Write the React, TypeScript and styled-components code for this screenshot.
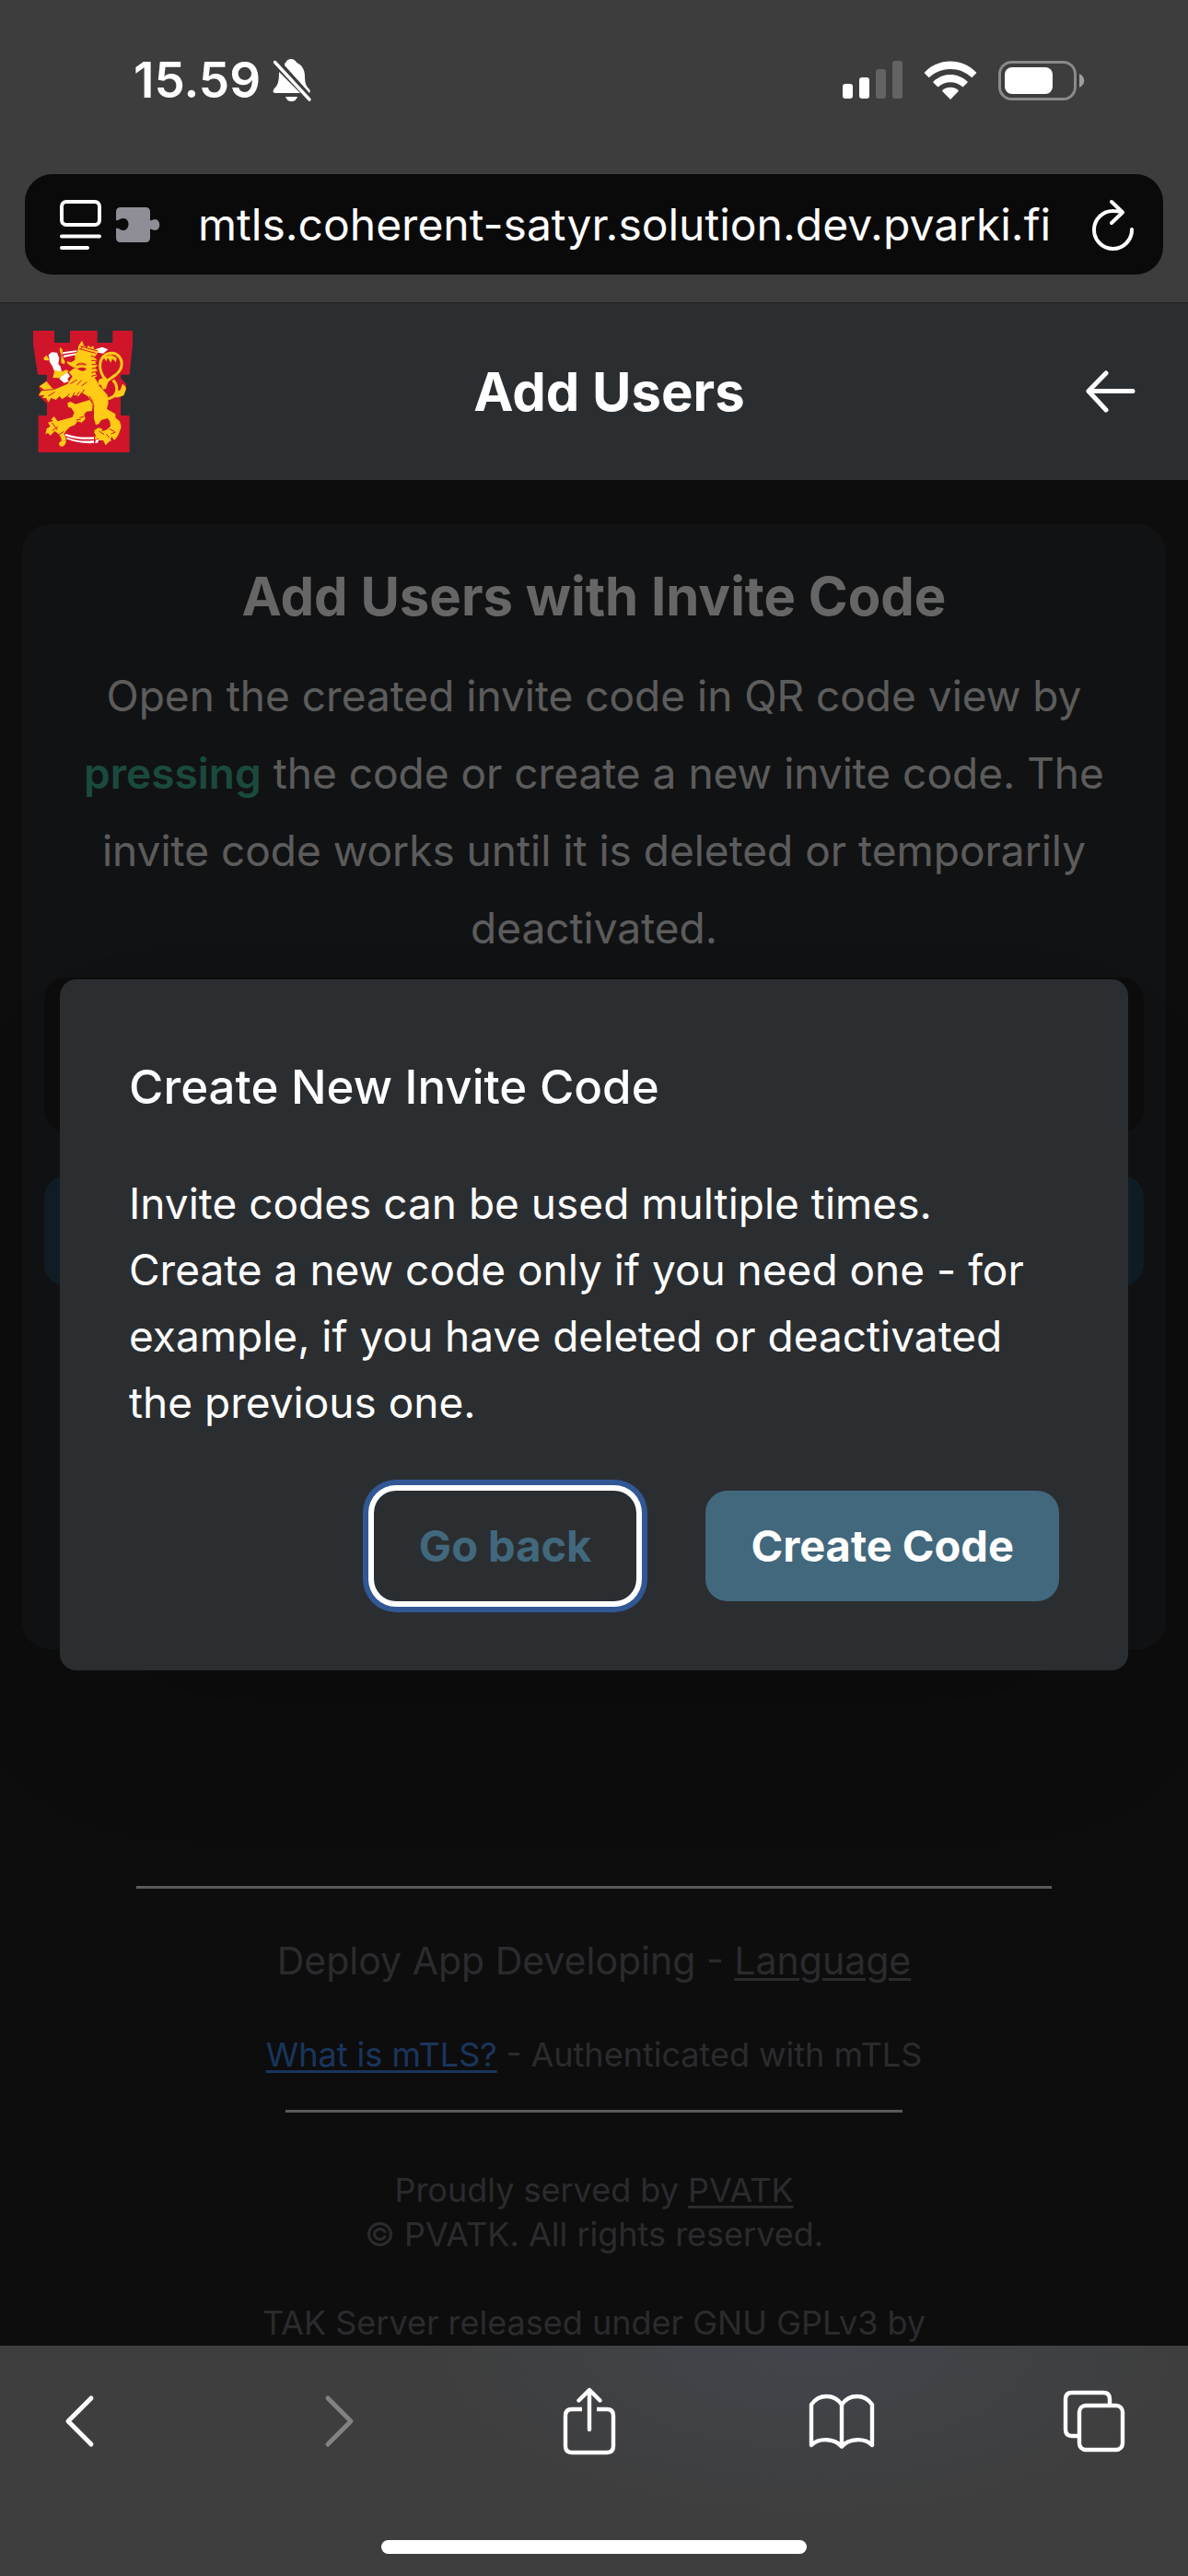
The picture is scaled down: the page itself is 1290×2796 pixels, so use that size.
import React from "react";
import styled, { createGlobalStyle } from "styled-components";

const GlobalStyle = createGlobalStyle`
  *, *::before, *::after { box-sizing: border-box; }
  body {
    margin: 0;
    background: #212121;
    color: #ffffff;
    font-family: Inter, "Liberation Sans", sans-serif;
  }
  h1, h2, p { margin: 0; }
  button, input { font: inherit; color: inherit; }
`;

const Screen = styled.div`
  display: flex;
  flex-direction: column;
  height: 100vh;
  overflow: hidden;
`;

/* ---------- Phone and browser chrome ---------- */

const TopChrome = styled.div`
  flex: none;
  background: #3d3d3d;
  border-bottom: 1px solid #222222;
`;

const StatusBar = styled.div`
  display: flex;
  align-items: center;
  justify-content: space-between;
  height: 174px;
  padding: 0 112px 0 145px;
`;

const StatusGroup = styled.div<{ $gap: number }>`
  display: flex;
  align-items: center;
  gap: ${(p) => p.$gap}px;
`;

const Clock = styled.time`
  font-size: 53px;
  line-height: 60px;
  font-weight: 600;
`;

const AddressRow = styled.div`
  padding: 15px 27px 30px;
`;

const AddressBar = styled.div`
  display: flex;
  align-items: center;
  height: 109px;
  padding: 0 31px 0 38px;
  border-radius: 30px;
  background: #0a0a0a;
`;

const IconButton = styled.button`
  display: flex;
  flex: none;
  align-items: center;
  justify-content: center;
  padding: 0;
  border: 0;
  background: none;
  color: #ffffff;

  &:disabled { color: #828282; }
`;

const PuzzleButton = styled(IconButton)`
  margin-left: 16px;
  color: #8f8e96;
`;

const AddressInput = styled.input`
  flex: 1;
  min-width: 0;
  height: 72px;
  margin: 0 24px 0 41px;
  padding: 0;
  border: 0;
  outline: 0;
  background: none;
  font-size: 48px;
`;

const BottomChrome = styled.div`
  flex: none;
  background:
    radial-gradient(ellipse 420px 190px at 68% 0, #41454b, rgba(65, 69, 75, 0)),
    #3e3e3e;
`;

const Toolbar = styled.nav`
  display: flex;
  align-items: center;
  justify-content: space-between;
  height: 181px;
  padding: 0 66px 18px 56px;
`;

const ToolButton = styled(IconButton)`
  width: 72px;
  height: 90px;
`;

const HomeIndicator = styled.div`
  width: 462px;
  height: 15px;
  margin: 30px auto 24px;
  border-radius: 8px;
  background: #ffffff;
`;

/* ---------- Web page ---------- */

const Viewport = styled.div`
  position: relative;
  flex: 1;
  min-height: 0;
  overflow: hidden;
  background: #212121;
`;

const Header = styled.header`
  position: relative;
  z-index: 2;
  display: grid;
  grid-template-columns: 108px 1fr 54px;
  align-items: center;
  height: 192px;
  padding: 0 57px 0 36px;
  background: #2b2e31;
`;

const PageTitle = styled.h1`
  font-size: 58px;
  line-height: 84px;
  font-weight: 700;
  text-align: center;
`;

const Card = styled.section`
  min-height: 1221px;
  margin: 48px 24px 0;
  padding: 36px 24px 24px;
  border-radius: 30px;
  background: #2b2e31;
`;

const CardTitle = styled.h2`
  margin-bottom: 24px;
  font-size: 58px;
  line-height: 84px;
  font-weight: 700;
  text-align: center;
`;

const CardText = styled.p`
  margin-bottom: 12px;
  padding: 0 36px;
  color: #e5e5e5;
  font-size: 46px;
  line-height: 84px;
  text-align: center;
`;

const Highlight = styled.strong`
  color: #43b898;
  font-weight: 600;
`;

const CodeRow = styled.div`
  height: 167px;
  margin-bottom: 48px;
  border-radius: 24px;
  background: #212121;
`;

const WideButton = styled.button`
  display: block;
  width: 100%;
  height: 120px;
  border: 0;
  border-radius: 24px;
  background: #2b4c60;
`;

const Footer = styled.footer`
  display: flex;
  flex-direction: column;
  align-items: center;
  padding-top: 257px;
  color: #6c6c74;
  text-align: center;
`;

const Rule = styled.hr<{ $width: number; $above?: number }>`
  width: ${(p) => p.$width}%;
  height: 3px;
  margin: ${(p) => p.$above ?? 0}px 0 0;
  border: 0;
  background: #e0e0e0;
`;

const FooterLine = styled.p<{ $large?: boolean; $above: number }>`
  margin-top: ${(p) => p.$above}px;
  font-size: ${(p) => (p.$large ? 41 : 36)}px;
  line-height: ${(p) => (p.$large ? 60 : 48)}px;
`;

const FooterLink = styled.a<{ $blue?: boolean }>`
  color: ${(p) => (p.$blue ? "#4186e6" : "inherit")};
  text-decoration: underline;
  text-decoration-thickness: 3px;
  text-underline-offset: 4px;
`;

/* ---------- Dialog ---------- */

const Overlay = styled.div`
  position: absolute;
  inset: 0;
  z-index: 1;
  display: flex;
  align-items: center;
  padding: 0 65px;
  background: rgba(0, 0, 0, 0.6);
`;

const Dialog = styled.div`
  width: 100%;
  padding: 75px;
  border-radius: 18px;
  background: #2b2e31;
  box-shadow: 0 75px 150px -36px rgba(0, 0, 0, 0.15);
`;

const DialogTitle = styled.h2`
  margin-bottom: 48px;
  font-size: 51px;
  line-height: 84px;
  font-weight: 500;
`;

const DialogText = styled.p`
  font-size: 46px;
  line-height: 72px;
`;

const Actions = styled.div`
  display: flex;
  justify-content: flex-end;
  gap: 75px;
  margin-top: 60px;
`;

const Action = styled.button<{ $primary?: boolean }>`
  height: 120px;
  padding: 0 49px;
  border: 0;
  border-radius: 24px;
  background: ${(p) => (p.$primary ? "#42687d" : "transparent")};
  color: ${(p) => (p.$primary ? "#ffffff" : "#42687d")};
  box-shadow: ${(p) => (p.$primary ? "none" : "0 0 0 6px #ffffff, 0 0 0 12px #325795")};
  font-size: 47px;
  font-weight: 700;
  white-space: nowrap;
`;

/* ---------- Drawings ---------- */

const BellOff = () => (
  <svg width="44" height="48" viewBox="0 0 44 48" fill="currentColor" aria-hidden="true">
    <path d="M14 6C16 5 16 1 21 1s5 4 8 5c5 3 7 8 7 14 0 8 2 11 5 14 1 1 1 3 0 4L14 8z" />
    <path d="M8 15l23 23H4c-3 0-3-3-1-5 4-4 5-8 5-18z" />
    <path d="M15 42h13c-1 3-3 5-6.500 5S16 45 15 42z" />
    <path d="M3.500 4.500L41 45" stroke="currentColor" strokeWidth="3.400" strokeLinecap="round" />
  </svg>
);

const Signal = () => (
  <svg width="65" height="42" viewBox="0 0 65 42" fill="currentColor" aria-hidden="true">
    <rect x="0" y="25" width="11" height="16" rx="3" />
    <rect x="18" y="18" width="11" height="23" rx="3" />
    <rect x="36" y="9" width="11" height="32" rx="3" opacity="0.2" />
    <rect x="54" y="0" width="11" height="41" rx="3" opacity="0.2" />
  </svg>
);

const Wifi = () => (
  <svg width="58" height="42" viewBox="0 0 58 42" fill="currentColor" aria-hidden="true">
    <path d="M1 12.500C16-3.500 42-3.500 57 12.500l.3.800-5 5c-13-12.500-33.600-12.500-46.600 0l-5-5z" />
    <path d="M10.500 22.500c10.500-10 26.500-10 37 0l.2 1-5.200 5c-8-7-19-7-27 0l-5.200-5z" />
    <path d="M20.300 32c5-4.300 12.400-4.300 17.400 0l.1 1L29 42l-8.800-9z" />
  </svg>
);

const Battery = () => (
  <svg width="94" height="43" viewBox="0 0 94 43" fill="currentColor" aria-hidden="true">
    <rect x="1.500" y="1.500" width="82" height="40" rx="13" fill="none" stroke="currentColor" strokeWidth="3" opacity="0.4" />
    <rect x="7" y="7" width="52" height="29" rx="8" />
    <path d="M88 14c7 3 7 12 0 15z" opacity="0.5" />
  </svg>
);

const ReaderIcon = () => (
  <svg width="45" height="54" viewBox="0 0 45 54" fill="none" stroke="currentColor" strokeWidth="4" strokeLinecap="round" aria-hidden="true">
    <rect x="2" y="2" width="41" height="25" rx="5" />
    <path d="M2 39.500h41M2 52h28" />
  </svg>
);

const PuzzleIcon = () => (
  <svg width="48" height="40" viewBox="0 0 48 40" fill="currentColor" aria-hidden="true">
    <path d="M5 1h27q5 0 5 5v9c2 1 3-1 5-1 7 0 7 12 0 12-2 0-3-2-5-1v9q0 5-5 5H5q-5 0-5-5V24c3-1 3 1 7 2 8 1 9-13 1-13-4 0-5 3-8 2V6q0-5 5-5z" />
  </svg>
);

const ReloadIcon = () => (
  <svg width="46" height="56" viewBox="0 0 46 56" fill="none" stroke="currentColor" strokeWidth="4" strokeLinecap="round" strokeLinejoin="round" aria-hidden="true">
    <path d="M43 33A20.500 20.500 0 1 1 23 13c4 0 6 .3 9 1" />
    <path d="M21 3l12 11.500L21 26" />
  </svg>
);

const ArrowLeft = () => (
  <svg width="54" height="46" viewBox="0 0 54 46" fill="none" stroke="currentColor" strokeWidth="5" strokeLinecap="round" strokeLinejoin="round" aria-hidden="true">
    <path d="M22 3L3 22.500 22 43M3 22.500h48" />
  </svg>
);

const Chevron = ({ right }: { right?: boolean }) => (
  <svg width="48" height="58" viewBox="0 0 48 58" fill="none" stroke="currentColor" strokeWidth="5" strokeLinecap="round" strokeLinejoin="round" aria-hidden="true">
    <path d={right ? "M14 4l25 25-25 25" : "M31 4L6 29l25 25"} />
  </svg>
);

const ShareIcon = () => (
  <svg width="58" height="74" viewBox="0 0 58 74" fill="none" stroke="currentColor" strokeWidth="4.400" strokeLinecap="round" strokeLinejoin="round" aria-hidden="true">
    <path d="M21 24H10q-7 0-7 7v33q0 7 7 7h38q7 0 7-7V31q0-7-7-7H37" strokeLinecap="butt" />
    <path d="M29 46V4M17.500 14.500L29 3l11.500 11.500" />
  </svg>
);

const BookIcon = () => (
  <svg width="72" height="62" viewBox="0 0 72 62" fill="none" stroke="currentColor" strokeWidth="4.400" strokeLinejoin="round" strokeLinecap="round" aria-hidden="true">
    <path d="M3 13C11 1 28 1 36 13 44 1 61 1 69 13v44c-8-8-25-8-33 1.500C28 49 11 49 3 57zM36 13v45" />
  </svg>
);

const TabsIcon = () => (
  <svg width="68" height="68" viewBox="0 0 68 68" fill="none" stroke="currentColor" strokeWidth="4.400" aria-hidden="true">
    <path d="M17 50h-7q-7 0-7-7V10q0-7 7-7h34q7 0 7 7v7" />
    <rect x="18" y="17" width="47" height="48" rx="7" />
  </svg>
);

const Crest = () => (
  <svg width="108" height="132" viewBox="48 27 324 396" role="img" aria-label="Lion crest">
    <path fill="#d0152b" d="M48 27h69v39h51V27h89v39h50V27h65v43l-10 100h-29v10l10 12 9 10-4 24-15 14v63h29v120H65V303h28v-38l-14-14-14-14 6-14-5-14 27-22v-17H63L48 70z" />
    <g fill="#ffffff">
      <path d="M144 97l46-6v5l-46 7zM146 107l43-7 1 5-43 9zM245 89l28-9 19 8-16 13-38-7z" />
      <path d="M98 106l10-9 18 1 7 18-3 19 7 8 4 17-24-1-6-16-9-14z" />
      <path d="M148 162l12 1 8 12-8 9 4 8-15 5-16-14z" />
      <path d="M154 362c28 11 58 13 92 11v7c-34 2-66-1-94-11zM158 374c30 11 58 14 88 10v9c-34 2-66-4-90-14zM252 382l10-1-4 11-8 1zM288 380l9-3 6 8-14 2z" />
    </g>
    <g fill="#ffcb17">
      <path d="M82 115l10-8 6 11 1 6-15-1zM136 80l8 9-2 20 10 19-3 8-10-5 1-24-6-16zM118 155l24 5 14-6 8 5-12 9-20 13-20-1z" />
      <path d="M207 59L214 76 222 82 229 75 235 82 244 76 246 86 262 90 255 104 247 114 258 124 250 130 258 140 250 147 258 158 250 164 257 174 248 180 255 190 262 205 290 236 293 262 288 282 316 298 316 310 330 322 335 340 328 360 322 372 312 384 304 372 296 388 284 400 276 384 262 384 258 366 270 354 286 350 300 338 298 322 290 312 270 318 262 330 252 334 246 312 246 280 238 256 226 240 205 228 196 240 180 236 170 246 158 240 142 250 134 240 122 252 106 246 98 260 90 246 78 246 84 236 66 238 74 224 84 220 68 208 92 192 108 212 118 218 160 200 176 176 164 162 180 150 190 148 178 146 160 134 158 126 172 130 184 122 184 104 192 96 196 76z" />
      <path d="M160 262L170 258 186 266 232 252 242 268 240 288 222 290 214 300 218 314 206 326 192 322 184 334 168 340 156 352 149 362C160 384 156 404 139 404c-10-4-8-15 0-16 4-8-2-18-12-28L118 354 104 368 96 360 88 364 92 346 104 338 96 326 114 320 106 316 116 306 128 322 176 308 182 294 172 278 162 276z" />
      <path d="M248 350l14-7 12 4-5 9 11 12-8 17-12-7-12 2 4-13-5-8z" />
    </g>
    <g fill="none" stroke="#ffcb17" strokeWidth="9" strokeLinejoin="round">
      <path d="M280 182C263 157 260 128 278 110c15-14 38-13 50 1 16 21 8 45-12 60l-28 20-10 18" />
      <path d="M308 188c15 14 16 36 6 48-8 9-18 12-28 14" />
    </g>
    <g fill="#ffcb17">
      <path d="M276 112l10 15 5-12 10 16 5-13 12 12 2-15-18-9zM262 186l22-8 10 12-9 26-10 2-6-14-10-2z" />
      <path d="M312 228l20-8 7-20 9 8 3 8-8 22-18 6-14 0z" />
    </g>
    <g fill="none" stroke="#d0152b" strokeWidth="3" strokeLinecap="round">
      <path d="M203 78l52 14M200 86l50 14M211 75l-8 12M190 138c10-9 22-6 31 0-7-1-22-1-31 0z" />
      <path d="M194 151c11-4 20-5 26 1-8 7-18 5-26-1z" fill="#d0152b" />
      <path d="M237 109l18 5M239 124l18 0M240 137l18 0M240 150l18-2M239 163l18-4M238 175l16-4M190 187l-20 12M205 189l-14 14M222 195l-16 11M214 219l-8 14M198 226l-8 12M183 229l-6 10M165 233l-6 8M82 221l32-3M98 239l20-12M232 241l10 18 4 16" />
      <path d="M110 327l16 22M111 352l17-12M132 365l15-9M297 347l16 8M303 362l12-4M287 365l8 9M264 355l14 9M212 307l-12 3M202 316l-13 2" />
    </g>
  </svg>
);

export default function App() {
  return (
    <Screen>
      <GlobalStyle />
      <TopChrome>
        <StatusBar>
          <StatusGroup $gap={12}>
            <Clock>15.59</Clock>
            <BellOff />
          </StatusGroup>
          <StatusGroup $gap={23}>
            <Signal />
            <Wifi />
            <Battery />
          </StatusGroup>
        </StatusBar>
        <AddressRow>
          <AddressBar>
            <IconButton type="button" aria-label="Page menu"><ReaderIcon /></IconButton>
            <PuzzleButton type="button" aria-label="Extensions"><PuzzleIcon /></PuzzleButton>
            <AddressInput aria-label="Address" defaultValue="mtls.coherent-satyr.solution.dev.pvarki.fi" />
            <IconButton type="button" aria-label="Reload"><ReloadIcon /></IconButton>
          </AddressBar>
        </AddressRow>
      </TopChrome>

      <Viewport>
        <Header>
          <Crest />
          <PageTitle>Add Users</PageTitle>
          <IconButton type="button" aria-label="Back"><ArrowLeft /></IconButton>
        </Header>

        <main>
          <Card>
            <CardTitle>Add Users with Invite Code</CardTitle>
            <CardText>
              Open the created invite code in QR code view by <Highlight>pressing</Highlight> the
              code or create a new invite code. The invite code works until it is deleted or
              temporarily deactivated.
            </CardText>
            <CodeRow />
            <WideButton type="button" aria-label="Create new invite code" />
          </Card>
        </main>

        <Footer>
          <Rule $width={77} />
          <FooterLine $large $above={48}>
            Deploy App Developing - <FooterLink href="#language">Language</FooterLink>
          </FooterLine>
          <FooterLine $above={48}>
            <FooterLink $blue href="#mtls">What is mTLS?</FooterLink> - Authenticated with mTLS
          </FooterLine>
          <Rule $width={52} $above={36} />
          <FooterLine $above={60}>
            Proudly served by <FooterLink href="#pvatk">PVATK</FooterLink>
            <br />© PVATK. All rights reserved.
          </FooterLine>
          <FooterLine $above={48}>TAK Server released under GNU GPLv3 by</FooterLine>
        </Footer>

        <Overlay>
          <Dialog role="dialog" aria-modal="true" aria-labelledby="dialog-title">
            <DialogTitle id="dialog-title">Create New Invite Code</DialogTitle>
            <DialogText>
              Invite codes can be used multiple times. Create a new code only if you need one -
              for example, if you have deleted or deactivated the previous one.
            </DialogText>
            <Actions>
              <Action type="button">Go back</Action>
              <Action type="button" $primary>Create Code</Action>
            </Actions>
          </Dialog>
        </Overlay>
      </Viewport>

      <BottomChrome>
        <Toolbar aria-label="Browser">
          <ToolButton type="button" aria-label="Go back"><Chevron /></ToolButton>
          <ToolButton type="button" aria-label="Go forward" disabled><Chevron right /></ToolButton>
          <ToolButton type="button" aria-label="Share"><ShareIcon /></ToolButton>
          <ToolButton type="button" aria-label="Bookmarks"><BookIcon /></ToolButton>
          <ToolButton type="button" aria-label="Tabs"><TabsIcon /></ToolButton>
        </Toolbar>
        <HomeIndicator />
      </BottomChrome>
    </Screen>
  );
}
